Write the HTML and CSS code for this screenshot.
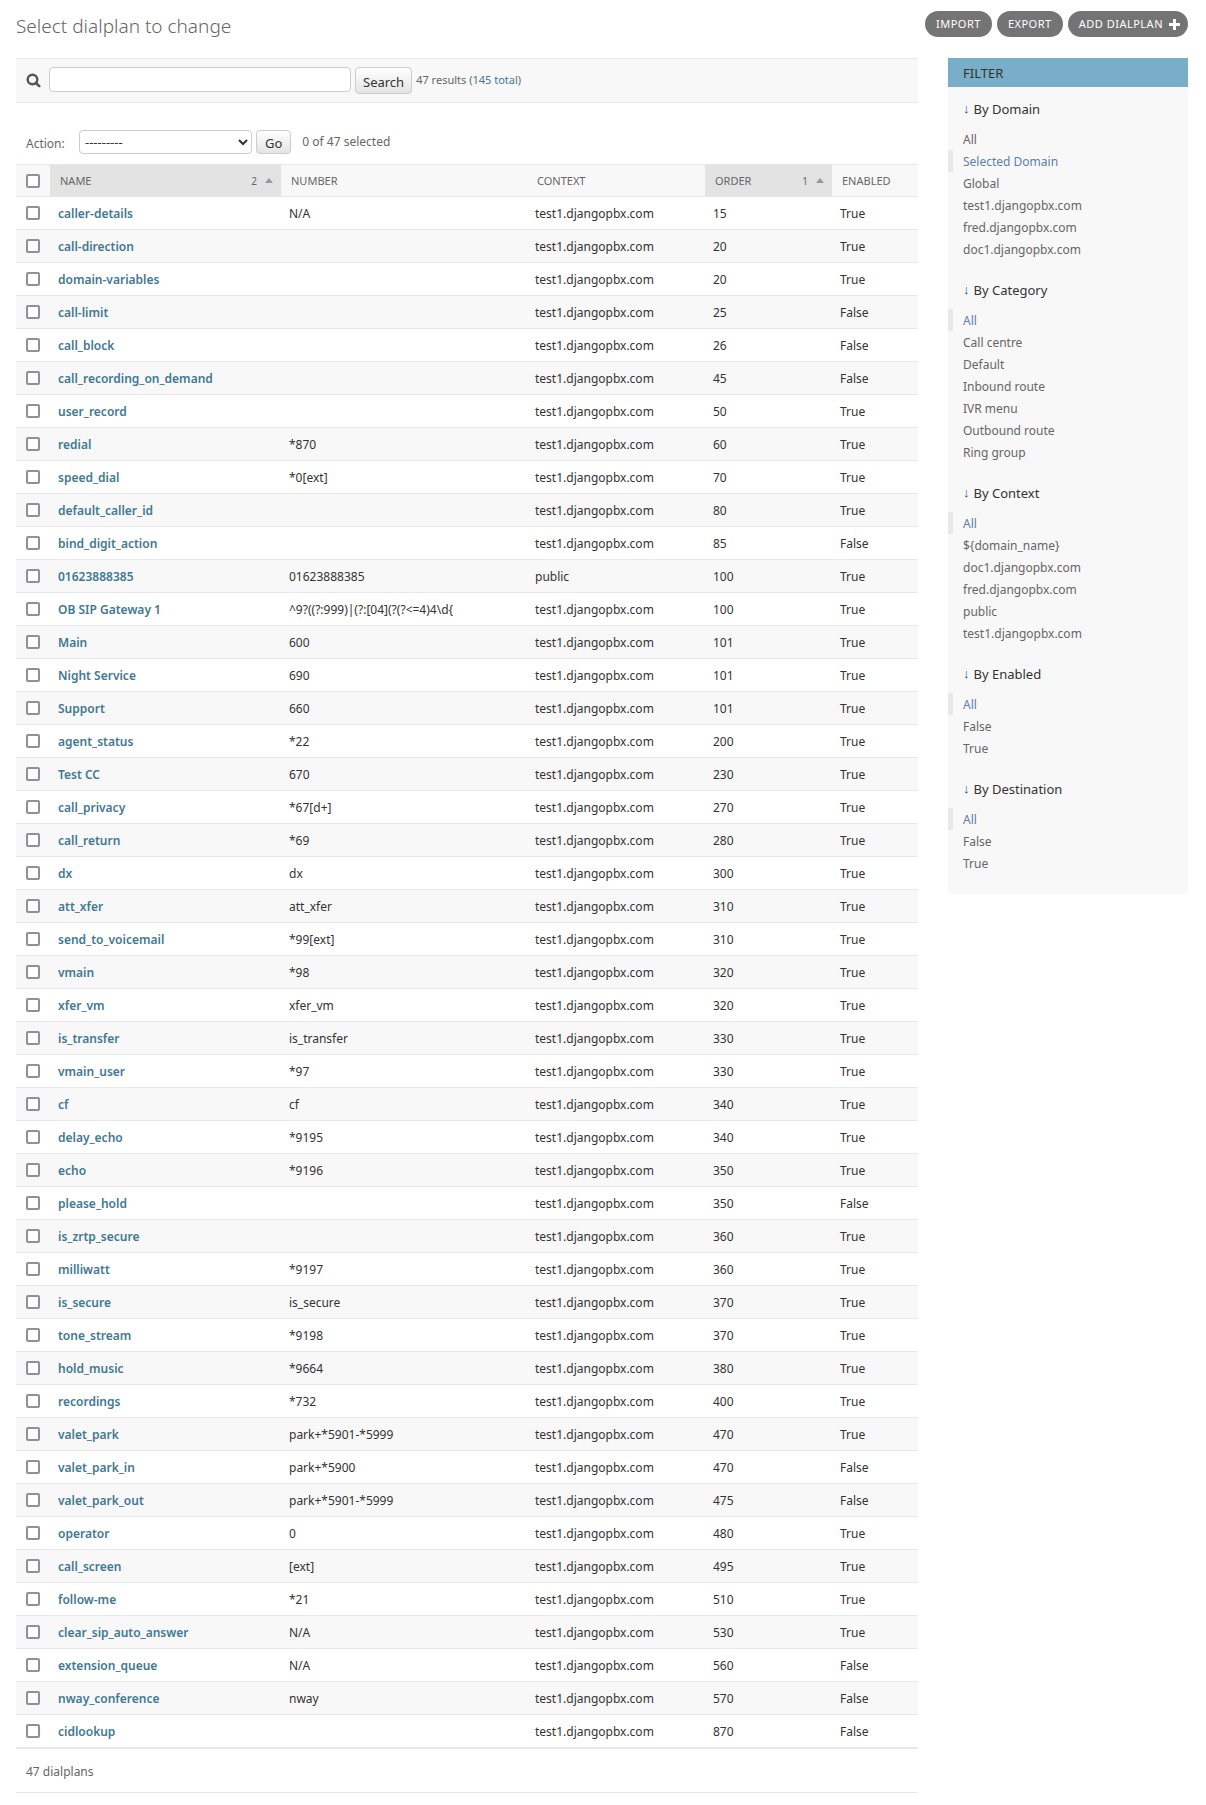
FILE: index.html
```html
<!DOCTYPE html>
<html lang="en">
<head>
<meta charset="utf-8">
<title>Select dialplan to change</title>
<link rel="stylesheet" href="styles.css">
</head>
<body>
<header class="top">
<h1>Select dialplan to change</h1>
<nav class="tools"><a href="#import">Import</a><a href="#export">Export</a><a class="add" href="#add">Add dialplan<svg width="11" height="11" viewBox="0 0 11 11" aria-hidden="true"><path d="M4 0h3v4h4v3H7v4H4V7H0V4h4z" fill="#fff"/></svg></a></nav>
</header>
<div class="layout">
<main class="main">
<form class="search">
<label for="q"><svg width="15" height="16" viewBox="0 0 15 16" role="img" aria-label="Search"><circle cx="6.500" cy="6.500" r="4.800" fill="none" stroke="#555" stroke-width="2.400"/><path d="M10 10l3.200 3.200" stroke="#555" stroke-width="2.600" stroke-linecap="round"/></svg></label>
<input type="text" id="q"><button type="submit">Search</button>
<span class="results">47 results (<a href="#all">145 total</a>)</span>
</form>
<form class="actions">
<label for="action">Action:</label>
<select id="action"><option>---------</option></select><button type="submit">Go</button>
<span class="counter">0 of 47 selected</span>
</form>
<table>
<colgroup><col class="c-check"><col class="c-name"><col class="c-number"><col class="c-context"><col class="c-order"><col></colgroup>
<thead><tr><th><input type="checkbox" aria-label="Select all"></th><th class="sorted"><div><a href="#name">Name</a><span class="prio">2</span><i></i></div></th><th><a href="#number">Number</a></th><th><a href="#context">Context</a></th><th class="sorted"><div><a href="#order">Order</a><span class="prio">1</span><i></i></div></th><th><a href="#enabled">Enabled</a></th></tr></thead>
<tbody>
<tr><td><input type="checkbox" aria-label="caller-details"></td><th><a href="#d">caller-details</a></th><td>N/A</td><td>test1.djangopbx.com</td><td>15</td><td>True</td></tr>
<tr><td><input type="checkbox" aria-label="call-direction"></td><th><a href="#d">call-direction</a></th><td></td><td>test1.djangopbx.com</td><td>20</td><td>True</td></tr>
<tr><td><input type="checkbox" aria-label="domain-variables"></td><th><a href="#d">domain-variables</a></th><td></td><td>test1.djangopbx.com</td><td>20</td><td>True</td></tr>
<tr><td><input type="checkbox" aria-label="call-limit"></td><th><a href="#d">call-limit</a></th><td></td><td>test1.djangopbx.com</td><td>25</td><td>False</td></tr>
<tr><td><input type="checkbox" aria-label="call_block"></td><th><a href="#d">call_block</a></th><td></td><td>test1.djangopbx.com</td><td>26</td><td>False</td></tr>
<tr><td><input type="checkbox" aria-label="call_recording_on_demand"></td><th><a href="#d">call_recording_on_demand</a></th><td></td><td>test1.djangopbx.com</td><td>45</td><td>False</td></tr>
<tr><td><input type="checkbox" aria-label="user_record"></td><th><a href="#d">user_record</a></th><td></td><td>test1.djangopbx.com</td><td>50</td><td>True</td></tr>
<tr><td><input type="checkbox" aria-label="redial"></td><th><a href="#d">redial</a></th><td>*870</td><td>test1.djangopbx.com</td><td>60</td><td>True</td></tr>
<tr><td><input type="checkbox" aria-label="speed_dial"></td><th><a href="#d">speed_dial</a></th><td>*0[ext]</td><td>test1.djangopbx.com</td><td>70</td><td>True</td></tr>
<tr><td><input type="checkbox" aria-label="default_caller_id"></td><th><a href="#d">default_caller_id</a></th><td></td><td>test1.djangopbx.com</td><td>80</td><td>True</td></tr>
<tr><td><input type="checkbox" aria-label="bind_digit_action"></td><th><a href="#d">bind_digit_action</a></th><td></td><td>test1.djangopbx.com</td><td>85</td><td>False</td></tr>
<tr><td><input type="checkbox" aria-label="01623888385"></td><th><a href="#d">01623888385</a></th><td>01623888385</td><td>public</td><td>100</td><td>True</td></tr>
<tr><td><input type="checkbox" aria-label="OB SIP Gateway 1"></td><th><a href="#d">OB SIP Gateway 1</a></th><td>^9?((?:999)|(?:[04](?(?&lt;=4)4\d{</td><td>test1.djangopbx.com</td><td>100</td><td>True</td></tr>
<tr><td><input type="checkbox" aria-label="Main"></td><th><a href="#d">Main</a></th><td>600</td><td>test1.djangopbx.com</td><td>101</td><td>True</td></tr>
<tr><td><input type="checkbox" aria-label="Night Service"></td><th><a href="#d">Night Service</a></th><td>690</td><td>test1.djangopbx.com</td><td>101</td><td>True</td></tr>
<tr><td><input type="checkbox" aria-label="Support"></td><th><a href="#d">Support</a></th><td>660</td><td>test1.djangopbx.com</td><td>101</td><td>True</td></tr>
<tr><td><input type="checkbox" aria-label="agent_status"></td><th><a href="#d">agent_status</a></th><td>*22</td><td>test1.djangopbx.com</td><td>200</td><td>True</td></tr>
<tr><td><input type="checkbox" aria-label="Test CC"></td><th><a href="#d">Test CC</a></th><td>670</td><td>test1.djangopbx.com</td><td>230</td><td>True</td></tr>
<tr><td><input type="checkbox" aria-label="call_privacy"></td><th><a href="#d">call_privacy</a></th><td>*67[d+]</td><td>test1.djangopbx.com</td><td>270</td><td>True</td></tr>
<tr><td><input type="checkbox" aria-label="call_return"></td><th><a href="#d">call_return</a></th><td>*69</td><td>test1.djangopbx.com</td><td>280</td><td>True</td></tr>
<tr><td><input type="checkbox" aria-label="dx"></td><th><a href="#d">dx</a></th><td>dx</td><td>test1.djangopbx.com</td><td>300</td><td>True</td></tr>
<tr><td><input type="checkbox" aria-label="att_xfer"></td><th><a href="#d">att_xfer</a></th><td>att_xfer</td><td>test1.djangopbx.com</td><td>310</td><td>True</td></tr>
<tr><td><input type="checkbox" aria-label="send_to_voicemail"></td><th><a href="#d">send_to_voicemail</a></th><td>*99[ext]</td><td>test1.djangopbx.com</td><td>310</td><td>True</td></tr>
<tr><td><input type="checkbox" aria-label="vmain"></td><th><a href="#d">vmain</a></th><td>*98</td><td>test1.djangopbx.com</td><td>320</td><td>True</td></tr>
<tr><td><input type="checkbox" aria-label="xfer_vm"></td><th><a href="#d">xfer_vm</a></th><td>xfer_vm</td><td>test1.djangopbx.com</td><td>320</td><td>True</td></tr>
<tr><td><input type="checkbox" aria-label="is_transfer"></td><th><a href="#d">is_transfer</a></th><td>is_transfer</td><td>test1.djangopbx.com</td><td>330</td><td>True</td></tr>
<tr><td><input type="checkbox" aria-label="vmain_user"></td><th><a href="#d">vmain_user</a></th><td>*97</td><td>test1.djangopbx.com</td><td>330</td><td>True</td></tr>
<tr><td><input type="checkbox" aria-label="cf"></td><th><a href="#d">cf</a></th><td>cf</td><td>test1.djangopbx.com</td><td>340</td><td>True</td></tr>
<tr><td><input type="checkbox" aria-label="delay_echo"></td><th><a href="#d">delay_echo</a></th><td>*9195</td><td>test1.djangopbx.com</td><td>340</td><td>True</td></tr>
<tr><td><input type="checkbox" aria-label="echo"></td><th><a href="#d">echo</a></th><td>*9196</td><td>test1.djangopbx.com</td><td>350</td><td>True</td></tr>
<tr><td><input type="checkbox" aria-label="please_hold"></td><th><a href="#d">please_hold</a></th><td></td><td>test1.djangopbx.com</td><td>350</td><td>False</td></tr>
<tr><td><input type="checkbox" aria-label="is_zrtp_secure"></td><th><a href="#d">is_zrtp_secure</a></th><td></td><td>test1.djangopbx.com</td><td>360</td><td>True</td></tr>
<tr><td><input type="checkbox" aria-label="milliwatt"></td><th><a href="#d">milliwatt</a></th><td>*9197</td><td>test1.djangopbx.com</td><td>360</td><td>True</td></tr>
<tr><td><input type="checkbox" aria-label="is_secure"></td><th><a href="#d">is_secure</a></th><td>is_secure</td><td>test1.djangopbx.com</td><td>370</td><td>True</td></tr>
<tr><td><input type="checkbox" aria-label="tone_stream"></td><th><a href="#d">tone_stream</a></th><td>*9198</td><td>test1.djangopbx.com</td><td>370</td><td>True</td></tr>
<tr><td><input type="checkbox" aria-label="hold_music"></td><th><a href="#d">hold_music</a></th><td>*9664</td><td>test1.djangopbx.com</td><td>380</td><td>True</td></tr>
<tr><td><input type="checkbox" aria-label="recordings"></td><th><a href="#d">recordings</a></th><td>*732</td><td>test1.djangopbx.com</td><td>400</td><td>True</td></tr>
<tr><td><input type="checkbox" aria-label="valet_park"></td><th><a href="#d">valet_park</a></th><td>park+*5901-*5999</td><td>test1.djangopbx.com</td><td>470</td><td>True</td></tr>
<tr><td><input type="checkbox" aria-label="valet_park_in"></td><th><a href="#d">valet_park_in</a></th><td>park+*5900</td><td>test1.djangopbx.com</td><td>470</td><td>False</td></tr>
<tr><td><input type="checkbox" aria-label="valet_park_out"></td><th><a href="#d">valet_park_out</a></th><td>park+*5901-*5999</td><td>test1.djangopbx.com</td><td>475</td><td>False</td></tr>
<tr><td><input type="checkbox" aria-label="operator"></td><th><a href="#d">operator</a></th><td>0</td><td>test1.djangopbx.com</td><td>480</td><td>True</td></tr>
<tr><td><input type="checkbox" aria-label="call_screen"></td><th><a href="#d">call_screen</a></th><td>[ext]</td><td>test1.djangopbx.com</td><td>495</td><td>True</td></tr>
<tr><td><input type="checkbox" aria-label="follow-me"></td><th><a href="#d">follow-me</a></th><td>*21</td><td>test1.djangopbx.com</td><td>510</td><td>True</td></tr>
<tr><td><input type="checkbox" aria-label="clear_sip_auto_answer"></td><th><a href="#d">clear_sip_auto_answer</a></th><td>N/A</td><td>test1.djangopbx.com</td><td>530</td><td>True</td></tr>
<tr><td><input type="checkbox" aria-label="extension_queue"></td><th><a href="#d">extension_queue</a></th><td>N/A</td><td>test1.djangopbx.com</td><td>560</td><td>False</td></tr>
<tr><td><input type="checkbox" aria-label="nway_conference"></td><th><a href="#d">nway_conference</a></th><td>nway</td><td>test1.djangopbx.com</td><td>570</td><td>False</td></tr>
<tr><td><input type="checkbox" aria-label="cidlookup"></td><th><a href="#d">cidlookup</a></th><td></td><td>test1.djangopbx.com</td><td>870</td><td>False</td></tr>
</tbody>
</table>
<p class="paginator">47 dialplans</p>
</main>
<aside class="filter">
<h2>Filter</h2>
<h3>By Domain</h3>
<ul><li><a href="#f">All</a></li><li class="selected"><a href="#f">Selected Domain</a></li><li><a href="#f">Global</a></li><li><a href="#f">test1.djangopbx.com</a></li><li><a href="#f">fred.djangopbx.com</a></li><li><a href="#f">doc1.djangopbx.com</a></li></ul>
<h3>By Category</h3>
<ul><li class="selected"><a href="#f">All</a></li><li><a href="#f">Call centre</a></li><li><a href="#f">Default</a></li><li><a href="#f">Inbound route</a></li><li><a href="#f">IVR menu</a></li><li><a href="#f">Outbound route</a></li><li><a href="#f">Ring group</a></li></ul>
<h3>By Context</h3>
<ul><li class="selected"><a href="#f">All</a></li><li><a href="#f">${domain_name}</a></li><li><a href="#f">doc1.djangopbx.com</a></li><li><a href="#f">fred.djangopbx.com</a></li><li><a href="#f">public</a></li><li><a href="#f">test1.djangopbx.com</a></li></ul>
<h3>By Enabled</h3>
<ul><li class="selected"><a href="#f">All</a></li><li><a href="#f">False</a></li><li><a href="#f">True</a></li></ul>
<h3>By Destination</h3>
<ul><li class="selected"><a href="#f">All</a></li><li><a href="#f">False</a></li><li><a href="#f">True</a></li></ul>
</aside>
</div>
</body>
</html>
```
FILE: styles.css
```css
* { box-sizing: border-box; }
body { margin: 0; padding: 11px 18px 12px 16px; background: #fff; color: #333; font: 12px/16px "Noto Sans", "Open Sans", sans-serif; }
a { color: #417893; text-decoration: none; }
h1, h2, h3, p, ul { margin: 0; padding: 0; font-weight: 400; }
.top { display: flex; justify-content: space-between; align-items: flex-start; height: 47px; }
h1 { font-size: 19px; line-height: 30px; font-weight: 300; color: #666; }
.tools { display: flex; gap: 5px; }
.tools a { display: flex; align-items: center; gap: 6px; height: 26px; padding: 0 11px; border-radius: 13px; background: #747474; color: #fff; font-size: 11px; letter-spacing: 0.5px; text-transform: uppercase; }
.tools .add { padding-right: 8px; }
.layout { display: flex; align-items: flex-start; gap: 30px; }
.main { flex: 1; min-width: 0; }
.search { display: flex; align-items: flex-start; height: 45px; padding: 8px 10px; border: solid #e8e8e8; border-width: 1px 0; background: #f8f8f8; color: #666; }
.search label { width: 23px; padding-top: 6px; }
.search input { width: 302px; height: 25px; margin-right: 4px; border: 1px solid #ccc; border-radius: 4px; background: #fff; font: inherit; }
button { height: 27px; padding: 2px 7px 0; border: 1px solid #ccc; border-radius: 4px; background: linear-gradient(#fff, #e4e4e4); color: #333; font: inherit; font-size: 13px; line-height: 20px; }
.results { margin-left: 4px; padding-top: 5px; font-size: 11px; }
.actions { display: flex; align-items: center; height: 61px; padding: 17px 10px 0; color: #666; }
.actions label { width: 53px; padding-top: 3px; }
select { width: 173px; height: 24px; margin-right: 4px; padding: 0 0 0 1px; border: 1px solid #ccc; border-radius: 4px; background: #fff; color: #333; font: inherit; font-size: 13px; }
.actions button { height: 24px; padding: 2px 8px 0; }
.counter { margin-left: 11px; }
table { width: 100%; table-layout: fixed; border-collapse: separate; border-spacing: 0; border-bottom: 1px solid #e8e8e8; }
.c-check { width: 34px; }
.c-name { width: 231px; }
.c-number { width: 246px; }
.c-context { width: 178px; }
.c-order { width: 127px; }
td, th { height: 33px; padding: 2px 8px 0; border-bottom: 1px solid #e8e8e8; font-weight: 400; text-align: left; vertical-align: middle; white-space: nowrap; }
tbody th { font-weight: 600; }
tbody tr:nth-child(even), thead tr { background: #f8f8f8; }
thead th { padding: 0 10px; border-top: 1px solid #e8e8e8; font-size: 11px; text-transform: uppercase; }
thead a { color: #666; }
thead .sorted { padding-right: 8px; background: #e3e3e3; }
.sorted div { display: flex; align-items: center; }
.prio { margin-left: auto; margin-right: 8px; color: #666; font-size: 10px; }
.sorted i { border: 4px solid transparent; border-top: 0; border-bottom: 5px solid #999; }
td:first-child, thead th:first-child { padding: 0 10px; }
[type="checkbox"] { appearance: none; display: block; width: 14px; height: 14px; margin: 0; border: 2px solid #8f8f9d; border-radius: 2px; background: #fff; }
[type="checkbox"]:checked { background: #417893; }
.paginator { height: 44px; padding: 15px 10px; border-bottom: 1px solid #e8e8e8; color: #666; }
.filter { width: 240px; padding-bottom: 12px; background: #f8f8f8; }
.filter h2 { height: 29px; padding: 0 15px; background: #79aec8; font-size: 13px; line-height: 30px; text-transform: uppercase; }
.filter h3 { display: flex; gap: 4px; padding: 12px 15px 9px; font-size: 13px; line-height: 20px; }
.filter h3::before { content: "\2193"; color: #264b8d; font-family: "Liberation Sans", sans-serif; }
.filter ul { margin-bottom: 8px; }
.filter li { height: 22px; padding-left: 15px; line-height: 24px; list-style: none; }
.filter li a { color: #666; }
.filter .selected { padding-left: 10px; border-left: 5px solid #e8e8e8; }
.filter .selected a { color: #5b80b2; }
```
